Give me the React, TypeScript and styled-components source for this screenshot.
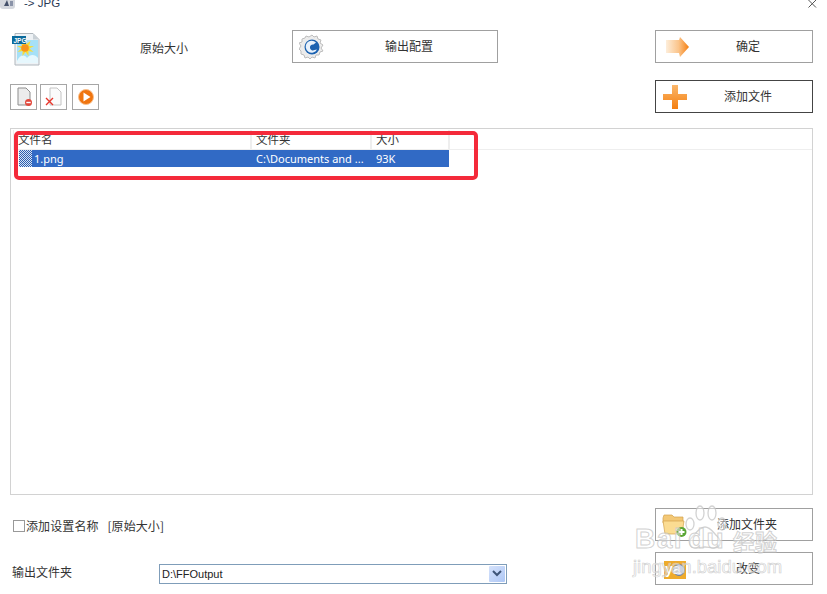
import React from "react";
import styled, { createGlobalStyle } from "styled-components";

const Global = createGlobalStyle`
  html, body { margin: 0; padding: 0; background: #fff; }
  body { font-family: "Noto Sans CJK SC", "Liberation Sans", sans-serif; color: #333; }
`;
const Page = styled.div`
  position: relative; width: 827px; height: 594px; overflow: hidden; background: #fff;
  padding: 0 14px 0 10px; box-sizing: border-box; display: flex; flex-direction: column;
`;
const TitleBar = styled.div`
  height: 10px; margin: 0 -4px 0 -10px; display: flex; overflow: hidden;
`;
const TitleIcon = styled.svg`width: 15px; height: 10px; flex: none;`;
const TitleText = styled.div`
  margin: -4px 0 0 9px; font: 11.5px/14px "Liberation Sans", sans-serif; color: #2b3a55; height: 14px; flex: 1;
`;
const CloseIcon = styled.svg`width: 9px; height: 8px; flex: none;`;
const TopRow = styled.div`
  margin-top: 20px; display: grid; grid-template-columns: 130px 152px 206px 157px 158px; grid-template-rows: 33px; align-items: start;
`;
const Logo = styled.svg`width: 30px; height: 34px; margin: 3px 0 0 2px; display: block;`;
const SizeLabel = styled.div`font-size: 12px; line-height: 16px; color: #333; margin-top: 10px;`;
const ActionButton = styled.button<{ $dark?: boolean }>`
  position: relative; height: 33px; box-sizing: border-box; background: #fff; padding: 0;
  border: 1px solid ${(p) => (p.$dark ? "#444" : "#a0a0a0")};
  font: 12px/16px "Noto Sans CJK SC", sans-serif; color: #333; display: block; width: 100%;
`;
const ButtonIcon = styled.svg<{ $left: number }>`
  position: absolute; left: ${(p) => p.$left}px; top: 3px; width: 26px; height: 26px;
`;
const ButtonLabel = styled.span<{ $shift?: number }>`
  display: block; text-align: center; margin-left: ${(p) => p.$shift ?? 28}px; transform: translateY(-1px);
`;
const SecondRow = styled.div`
  margin-top: 17px; display: flex; justify-content: space-between; align-items: center; height: 33px;
`;
const Tools = styled.div`display: flex; gap: 3px;`;
const ToolButton = styled.button<{ $gapLeft?: boolean }>`
  width: 27px; height: 26px; box-sizing: border-box; background: #fff; border: 1px solid #a6a6a6; padding: 0;
  display: flex; align-items: center; justify-content: center; margin-left: ${(p) => (p.$gapLeft ? 2 : 0)}px;
`;
const ToolIcon = styled.svg`width: 20px; height: 20px; display: block;`;
const WideSlot = styled.div`width: 158px;`;
const ListPanel = styled.div`
  margin-top: 15px; height: 367px; box-sizing: border-box; border: 1px solid #d2d2d2; padding: 1px 0 0 2px;
`;
const HeaderRow = styled.div`
  display: grid; grid-template-columns: 239px 120px 78px 1fr; height: 20px; box-sizing: border-box; border-bottom: 1px solid #eee;
  font-size: 11.5px; line-height: 18px; color: #333;
`;
const HeaderCell = styled.div<{ $first?: boolean }>`
  box-sizing: border-box; border-right: 2px solid #eee; padding-left: 4px;
  ${(p) => p.$first && "border-left: 1px solid #eee;"}
  overflow: hidden; height: 19px;
  &:last-child { border: 0; }
`;
const DataRow = styled.div`display: flex; height: 17px; padding-left: 6px;`;
const RowIcon = styled.div`
  width: 13px; height: 17px;
  background: repeating-conic-gradient(#2f5fae 0 25%, #d5e4f7 0 50%) 0 0 / 2px 2px;
`;
const RowBody = styled.div`
  background: #316ac5; color: #fff; width: 417px; display: grid; grid-template-columns: 219px 120px 78px;
  font: 11px/18px "Noto Sans", sans-serif;
`;
const RowCell = styled.div<{ $pad: number }>`padding-left: ${(p) => p.$pad}px; white-space: nowrap; overflow: hidden;`;
const Bottom = styled.div`margin-top: 13px; display: flex; justify-content: space-between;`;
const BottomLeft = styled.div`display: flex; flex-direction: column; padding-top: 10px;`;
const CheckRow = styled.label`display: flex; align-items: center; margin-left: 3px; font-size: 12px; line-height: 16px; color: #333; gap: 1px; height: 16px; word-spacing: 6px; letter-spacing: .1px;`;
const CheckBox = styled.span`width: 10px; height: 10px; border: 1px solid #999; display: block; background: #fff;`;
const OutputRow = styled.div`display: flex; margin-top: 30px; align-items: center;`;
const OutputLabel = styled.div`width: 147px; margin-left: 2px; font-size: 12px; line-height: 16px; color: #333; margin-top: -4px;`;
const Select = styled.div`
  width: 348px; height: 20px; box-sizing: border-box; border: 1px solid #7f9db9; display: flex; align-items: center; justify-content: space-between;
  font: 11px/18px "Liberation Sans", sans-serif; color: #222; padding: 0 1px 0 2px;
`;
const SelectArrow = styled.div`
  width: 16px; height: 16px; border-radius: 1px; background: linear-gradient(135deg, #d5e2fb, #aec7f5); display: flex; align-items: center; justify-content: center;
`;
const ArrowGlyph = styled.svg`width: 10px; height: 8px;`;
const BottomRight = styled.div`width: 158px; display: flex; flex-direction: column; gap: 11px;`;
const RedBox = styled.div`
  position: absolute; left: 14px; top: 131px; width: 464px; height: 49px; box-sizing: border-box; border: 4px solid #f42a3a; border-radius: 5px; pointer-events: none;
`;
const Watermark = styled.div`
  position: absolute; left: 633px; top: 505px; width: 150px; height: 72px; pointer-events: none; color: rgba(255,255,255,.45);
  -webkit-text-stroke: 1px rgba(195,195,195,.75); font-family: "Liberation Sans", sans-serif;
`;
const WatermarkWord = styled.div<{ $left: number }>`position: absolute; left: ${(p) => p.$left}px; top: 19px; font-size: 28px; font-weight: 700; line-height: 30px; letter-spacing: 1.5px; white-space: nowrap;`;
const WatermarkCn = styled.div`position: absolute; left: 100px; top: 21px; font: 700 22px/28px "Noto Sans CJK SC", sans-serif; white-space: nowrap;`;
const WatermarkUrl = styled.div`position: absolute; left: 0; top: 52px; font-size: 18.5px; line-height: 20px; white-space: nowrap; -webkit-text-stroke: .7px rgba(195,195,195,.75);`;
const Paw = styled.svg`position: absolute; left: 49px; top: 0; width: 46px; height: 46px;`;

const DocBase = ({ dark }: { dark?: boolean }) => (
  <path d="M4 1h8l4 4v13H4z" fill={dark ? "#ececec" : "#fbfbfb"} stroke={dark ? "#8d8d8d" : "#bbb"} strokeWidth="1" />
);

export default function App() {
  return (
    <Page>
      <Global />
      <TitleBar>
        <TitleIcon viewBox="0 0 15 10">
          <rect x="0" y="-4" width="15" height="13" rx="3" fill="#d5d8de" />
          <path d="M4 6l3-6 2 6z" fill="#44506a" />
          <rect x="10" y="1" width="3" height="5" fill="#8a93a8" />
        </TitleIcon>
        <TitleText>-&gt; JPG</TitleText>
        <CloseIcon viewBox="0 0 9 8">
          <path d="M.5 0l7.5 7.5M8 0L.5 7.5" stroke="#555" strokeWidth="1" fill="none" />
        </CloseIcon>
      </TitleBar>
      <TopRow>
        <Logo viewBox="0 0 30 34">
          <path d="M3 .5h18l6 6v25.5H3z" fill="#eef2f5" stroke="#b0b7bd" />
          <path d="M21 .5v6h6z" fill="#c9d1d7" />
          <rect x="5" y="7" width="21" height="23" fill="#a6e0f7" />
          <path d="M5 28c3-6 7-7 10-3 3-4 8-4 11 0v5H5z" fill="#e6f7fd" />
          <path d="M13 6l1.5 5 4-3-1.5 5 5 0-4.500 2.500 4 3.500-5-1 0 5-3-4-3 4 0-5-5 1 4-3.500L5 13l5 0-1.500-5 3.500 3z" fill="#f7dc3b" />
          <circle cx="13" cy="15" r="3.800" fill="#f7941d" />
          <rect x="0" y="3" width="14" height="8" fill="#0a6a9c" />
          <text x="1.500" y="9.700" fontFamily="Liberation Sans" fontWeight="700" fontSize="6.500" fill="#fff">JPG</text>
        </Logo>
        <SizeLabel>原始大小</SizeLabel>
        <ActionButton>
          <ButtonIcon $left={6} viewBox="0 0 26 26">
            <path d="M13 1l2 2 3-1 1 3 3 1-1 3 3 2-2 3 2 3-3 1-1 3-3 0-1 3-3-1-2 2-2-2-3 1-1-3-3-1 0-3-2-2 2-3-2-3 3-1 0-3 3-1 1-2 3 1z" fill="#ececec" stroke="#bdbdbd" />
            <circle cx="13" cy="13" r="7.500" fill="#1c62b0" />
            <path d="M17 8.500a6 6 0 1 0 1 7l-2.500 .500a3 3 0 1 1-1-5.500z" fill="#e8f1fb" />
          </ButtonIcon>
          <ButtonLabel>输出配置</ButtonLabel>
        </ActionButton>
        <div />
        <ActionButton>
          <ButtonIcon $left={9} viewBox="0 0 26 26">
            <defs>
              <linearGradient id="arrowFill" x1="0" x2="1" y1="0" y2="0">
                <stop offset="0" stopColor="#fdeedb" />
                <stop offset=".55" stopColor="#fbc48a" />
                <stop offset="1" stopColor="#f57e0f" />
              </linearGradient>
            </defs>
            <path d="M1 6h13l1-3 9 10-9 10-1-4H1z" fill="url(#arrowFill)" />
          </ButtonIcon>
          <ButtonLabel>确定</ButtonLabel>
        </ActionButton>
      </TopRow>
      <SecondRow>
        <Tools>
          <ToolButton>
            <ToolIcon viewBox="0 0 20 20">
              <DocBase dark />
              <circle cx="14.500" cy="15.500" r="3.500" fill="#e2483c" />
              <rect x="12.300" y="14.800" width="4.400" height="1.400" fill="#fff" />
            </ToolIcon>
          </ToolButton>
          <ToolButton>
            <ToolIcon viewBox="0 0 20 20">
              <path d="M6 1h7l4 4v13H6z" fill="#fbfbfb" stroke="#c4c4c4" />
              <path d="M2 11l7 7M9 11l-7 7" stroke="#e8352b" strokeWidth="1.400" />
            </ToolIcon>
          </ToolButton>
          <ToolButton $gapLeft>
            <ToolIcon viewBox="0 0 20 20">
              <circle cx="10" cy="10" r="7.500" fill="#f0750f" stroke="#f9c08e" />
              <path d="M7.500 5.500l7 4.500-7 4.500z" fill="#fff" />
            </ToolIcon>
          </ToolButton>
        </Tools>
        <WideSlot>
          <ActionButton $dark>
            <ButtonIcon $left={6} viewBox="0 0 26 26">
              <defs>
                <linearGradient id="plusFill" x1="0" x2="0" y1="0" y2="1">
                  <stop offset="0" stopColor="#fbb76b" />
                  <stop offset="1" stopColor="#f47f10" />
                </linearGradient>
              </defs>
              <path d="M10 1h6v9h9v6h-9v9h-6v-9H1v-6h9z" fill="url(#plusFill)" />
            </ButtonIcon>
            <ButtonLabel>添加文件</ButtonLabel>
          </ActionButton>
        </WideSlot>
      </SecondRow>
      <ListPanel>
        <HeaderRow>
          <HeaderCell $first>文件名</HeaderCell>
          <HeaderCell>文件夹</HeaderCell>
          <HeaderCell>大小</HeaderCell>
          <HeaderCell />
        </HeaderRow>
        <DataRow>
          <RowIcon />
          <RowBody>
            <RowCell $pad={2}>1.png</RowCell>
            <RowCell $pad={5}>C:\Documents and ...</RowCell>
            <RowCell $pad={5}>93K</RowCell>
          </RowBody>
        </DataRow>
      </ListPanel>
      <Bottom>
        <BottomLeft>
          <CheckRow>
            <CheckBox />
            添加设置名称 [原始大小]
          </CheckRow>
          <OutputRow>
            <OutputLabel>输出文件夹</OutputLabel>
            <Select>
              D:\FFOutput
              <SelectArrow>
                <ArrowGlyph viewBox="0 0 10 8">
                  <path d="M1 1l4 4 4-4" stroke="#3f5578" strokeWidth="2" fill="none" />
                </ArrowGlyph>
              </SelectArrow>
            </Select>
          </OutputRow>
        </BottomLeft>
        <BottomRight>
          <ActionButton>
            <ButtonIcon $left={6} viewBox="0 0 26 26">
              <path d="M1 6l1-3h8l2 2h9v6H1z" fill="#f3c876" stroke="#d2a24c" strokeWidth=".7" />
              <path d="M1 9h21l-2 13H3z" fill="#fbdc92" stroke="#d2a24c" strokeWidth=".7" />
              <circle cx="19.500" cy="20" r="5" fill="#5aa637" />
              <path d="M16.500 20h6M19.500 17v6" stroke="#fff" strokeWidth="2" />
            </ButtonIcon>
            <ButtonLabel $shift={26}>添加文件夹</ButtonLabel>
          </ActionButton>
          <ActionButton>
            <ButtonIcon $left={7} viewBox="0 0 26 26">
              <rect x="1" y="5" width="22" height="18" fill="#efab2c" />
              <circle cx="16" cy="14" r="5.500" fill="#c9d4e6" stroke="#6f7f9c" />
              <text x="2" y="18" fontFamily="Liberation Sans" fontWeight="700" fontSize="14" fill="#fff">ya</text>
            </ButtonIcon>
            <ButtonLabel>改变</ButtonLabel>
          </ActionButton>
        </BottomRight>
      </Bottom>
      <RedBox />
      <Watermark>
        <Paw viewBox="0 0 46 46">
          <g fill="rgba(255,255,255,.45)" stroke="rgba(195,195,195,.75)" strokeWidth="1.300">
            <ellipse cx="8" cy="19" rx="4" ry="6" />
            <ellipse cx="18" cy="8" rx="4" ry="7" />
            <ellipse cx="30" cy="8" rx="4" ry="7" />
            <ellipse cx="40" cy="19" rx="4" ry="6" />
            <path d="M23 22c5 0 8 5 12 9 5 5 4 12-3 12-4 0-6-1-9-1s-5 1-9 1c-7 0-8-7-3-12 4-4 7-9 12-9z" />
          </g>
        </Paw>
        <WatermarkWord $left={2}>Bai</WatermarkWord>
        <WatermarkWord $left={55}>du</WatermarkWord>
        <WatermarkCn>经验</WatermarkCn>
        <WatermarkUrl>jingyan.baidu.com</WatermarkUrl>
      </Watermark>
    </Page>
  );
}
